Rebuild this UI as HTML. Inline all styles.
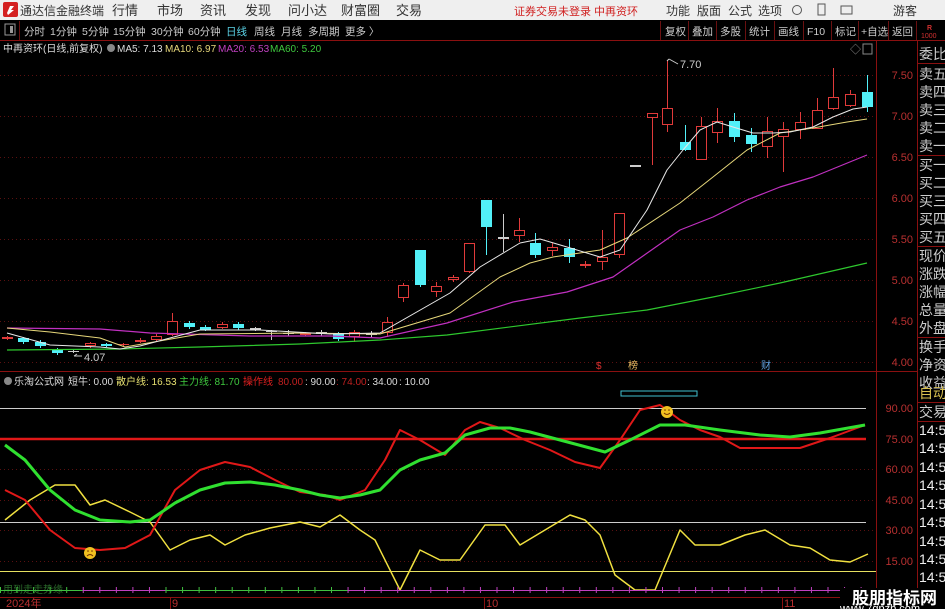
<!DOCTYPE html>
<html><head><meta charset="utf-8"><style>
html,body{margin:0;padding:0;background:#000;width:945px;height:609px;overflow:hidden}
svg{display:block;font-family:"Liberation Sans","Noto Sans CJK SC",sans-serif}
</style></head><body>
<svg id="s" width="945" height="609" xmlns="http://www.w3.org/2000/svg">
<rect x="0" y="0" width="945" height="609" fill="#000"/>
<rect x="0" y="0" width="945" height="20" fill="#efefef"/>
<rect x="3" y="2" width="15" height="15" rx="2" fill="#d42020"/>
<path d="M7 13 L10 6 L14 6 L11 10 L14 10 L8 15 Z" fill="#fff"/>
<g font-size="12" fill="#333">
<text x="20" y="15">通达信金融终端</text>
<text x="112" y="15" font-size="13">行情</text>
<text x="157" y="15" font-size="13">市场</text>
<text x="200" y="15" font-size="13">资讯</text>
<text x="245" y="15" font-size="13">发现</text>
<text x="288" y="15" font-size="13">问小达</text>
<text x="341" y="15" font-size="13">财富圈</text>
<text x="396" y="15" font-size="13">交易</text>
<text x="514" y="15" fill="#d02020" font-size="11">证券交易未登录  中再资环</text>
<text x="666" y="15">功能</text><text x="697" y="15">版面</text><text x="728" y="15">公式</text><text x="758" y="15">选项</text>
<text x="893" y="15">游客</text>
</g>
<circle cx="797" cy="10" r="4.5" fill="none" stroke="#555"/>
<rect x="818" y="4" width="7" height="11" fill="none" stroke="#555"/>
<rect x="841" y="6" width="11" height="8" fill="none" stroke="#555"/>
<rect x="0" y="20" width="945" height="20" fill="#000"/>
<line x1="0" y1="40.5" x2="945" y2="40.5" stroke="#8a1010"/>
<rect x="5" y="24" width="10" height="11" fill="none" stroke="#999"/>
<rect x="10" y="26" width="3" height="7" fill="#999"/>
<line x1="19.5" y1="21" x2="19.5" y2="40" stroke="#6a1010"/>
<g font-size="10.5" fill="#ccc">
<text x="24" y="35">分时</text><text x="50" y="35">1分钟</text><text x="82" y="35">5分钟</text><text x="113" y="35">15分钟</text><text x="151" y="35">30分钟</text><text x="188" y="35">60分钟</text>
<text x="226" y="35" fill="#5ad2e6">日线</text><text x="254" y="35">周线</text><text x="281" y="35">月线</text><text x="308" y="35">多周期</text><text x="345" y="35">更多 〉</text>
<text x="665" y="35">复权</text><text x="692" y="35">叠加</text><text x="720" y="35">多股</text><text x="749" y="35">统计</text><text x="778" y="35">画线</text><text x="807" y="35">F10</text><text x="835" y="35">标记</text><text x="861" y="35">+自选</text><text x="892" y="35">返回</text>
</g>
<g stroke="#6a1010">
<line x1="660.5" y1="21" x2="660.5" y2="40"/><line x1="688.5" y1="21" x2="688.5" y2="40"/><line x1="716.5" y1="21" x2="716.5" y2="40"/><line x1="745.5" y1="21" x2="745.5" y2="40"/><line x1="774.5" y1="21" x2="774.5" y2="40"/><line x1="803.5" y1="21" x2="803.5" y2="40"/><line x1="831.5" y1="21" x2="831.5" y2="40"/><line x1="858.5" y1="21" x2="858.5" y2="40"/><line x1="888.5" y1="21" x2="888.5" y2="40"/><line x1="916.5" y1="21" x2="916.5" y2="40"/>
</g>
<text x="927" y="30" font-size="7" fill="#d03030" font-weight="bold">R</text>
<text x="921" y="38" font-size="7" fill="#d03030">1000</text>
<g stroke="#8a1010">
<line x1="876.5" y1="41" x2="876.5" y2="609"/>
<line x1="917.5" y1="41" x2="917.5" y2="609"/>
<line x1="0" y1="371.5" x2="917" y2="371.5"/>
<line x1="0" y1="597.5" x2="917" y2="597.5"/>
</g>
<g id="grid" stroke="#5a1010" stroke-dasharray="1,3"></g>
<g font-size="10">
<text x="3" y="52" fill="#ddd">中再资环(日线,前复权)</text>
<circle cx="111" cy="48" r="4" fill="#888"/>
<text x="117" y="52" fill="#ddd">MA5: 7.13</text>
<text x="165" y="52" fill="#e6d77a">MA10: 6.97</text>
<text x="218" y="52" fill="#c040c0">MA20: 6.53</text>
<text x="270" y="52" fill="#3ec83e">MA60: 5.20</text>
</g>
<text x="850" y="53" font-size="11" fill="#888">◇</text>
<rect x="863" y="44" width="9" height="10" fill="none" stroke="#888"/>
<g font-size="11" fill="#b83030" text-anchor="end">
<text x="913" y="79">7.50</text><text x="913" y="120">7.00</text><text x="913" y="161">6.50</text><text x="913" y="202">6.00</text><text x="913" y="243">5.50</text><text x="913" y="284">5.00</text><text x="913" y="325">4.50</text><text x="913" y="366">4.00</text>
<text x="913" y="412">90.00</text><text x="913" y="443">75.00</text><text x="913" y="473">60.00</text><text x="913" y="504">45.00</text><text x="913" y="534">30.00</text><text x="913" y="565">15.00</text>
</g>
<g font-size="14" fill="#ccc">
<text x="919" y="59">委比</text>
<text x="919" y="79">卖五</text><text x="919" y="97">卖四</text><text x="919" y="115">卖三</text><text x="919" y="133">卖二</text><text x="919" y="151">卖一</text>
<text x="919" y="170">买一</text><text x="919" y="188">买二</text><text x="919" y="206">买三</text><text x="919" y="224">买四</text><text x="919" y="242">买五</text>
<text x="919" y="261">现价</text><text x="919" y="279">涨跌</text><text x="919" y="297">涨幅</text><text x="919" y="315">总量</text><text x="919" y="333">外盘</text>
<text x="919" y="352">换手</text><text x="919" y="370">净资</text><text x="919" y="388">收益</text>
<text x="919" y="398" fill="#d8c050">自动</text><text x="919" y="417">交易</text>
<text x="919" y="435" fill="#eee">14:56</text><text x="919" y="453" fill="#eee">14:56</text><text x="919" y="472" fill="#eee">14:56</text><text x="919" y="490" fill="#eee">14:56</text><text x="919" y="509" fill="#eee">14:56</text><text x="919" y="527" fill="#eee">14:56</text><text x="919" y="546" fill="#eee">14:56</text><text x="919" y="564" fill="#eee">14:56</text><text x="919" y="582" fill="#eee">14:56</text>
</g>
<g stroke="#8a1010"><line x1="918" y1="63.5" x2="945" y2="63.5"/><line x1="918" y1="155.5" x2="945" y2="155.5"/><line x1="918" y1="246.5" x2="945" y2="246.5"/><line x1="918" y1="337.5" x2="945" y2="337.5"/><line x1="918" y1="402.5" x2="945" y2="402.5"/><line x1="918" y1="421.5" x2="945" y2="421.5"/></g>
<g id="main"></g>
<text x="680" y="68" font-size="11" fill="#ccc">7.70</text>
<path d="M667 61 L669 59 M669 59 L678 64" stroke="#ccc" fill="none"/>
<text x="84" y="361" font-size="11" fill="#ccc">4.07</text>
<path d="M74 356 L82 356 M74 356 L77 354" stroke="#ccc" fill="none"/>
<text x="596" y="369" font-size="10" fill="#e03030">$</text>
<text x="628" y="369" font-size="10" fill="#e6b860">榜</text>
<text x="761" y="369" font-size="10" fill="#60a0e0">财</text>
<circle cx="8" cy="381" r="4" fill="#888"/>
<g font-size="10">
<text x="14" y="385" fill="#ddd">乐淘公式网</text>
<text x="68" y="385" fill="#ddd">短牛: 0.00</text>
<text x="116" y="385" fill="#e6e070">散户线: 16.53</text>
<text x="179" y="385" fill="#3ec83e">主力线: 81.70</text>
<text x="243" y="385" fill="#e02020">操作线</text>
<text x="278" y="385" fill="#c02020">80.00</text>
<text x="305" y="385" fill="#ddd">: 90.00</text>
<text x="336" y="385" fill="#c02020">: 74.00</text>
<text x="367" y="385" fill="#ddd">: 34.00</text>
<text x="399" y="385" fill="#ddd">: 10.00</text>
</g>
<rect x="621" y="391" width="76" height="5" fill="none" stroke="#40c0d0"/>
<g id="sub"></g>
<text x="3" y="593" font-size="10" fill="#2a6a2a">用到走走势缘</text>
<g id="strip"></g>
<g font-size="11" fill="#b83030">
<text x="6" y="607">2024年</text><text x="172" y="607">9</text><text x="486" y="607">10</text><text x="784" y="607">11</text>
</g>
<g stroke="#8a1010"><line x1="170.5" y1="598" x2="170.5" y2="609"/><line x1="484.5" y1="598" x2="484.5" y2="609"/><line x1="782.5" y1="598" x2="782.5" y2="609"/></g>
<rect x="840" y="588" width="105" height="21" fill="#000"/>
<text x="852" y="604" font-size="17" font-weight="bold" fill="#fff">股朋指标网</text>
<text x="840" y="612" font-size="11" fill="#fff">www.7gpzb.com</text>
</svg>
<script>
var NS="http://www.w3.org/2000/svg";
function el(p,t,a){var e=document.createElementNS(NS,t);for(var k in a)e.setAttribute(k,a[k]);p.appendChild(e);return e;}
var g=document.getElementById('grid');
[75,116,157,198,239,280,321,362,469,500,530,561].forEach(function(y){el(g,'line',{x1:0,x2:876,y1:y+.5,y2:y+.5});});
var m=document.getElementById('main');
var R='#e03a3a',C='#52f0f8',W='#ccc';
var cs=[[7,336,337,339,340,R],[23,337,338,342,344,C],[40,340,342,346,348,C],[57,348,350,353,355,C],[73,350,351,352,353,W],[90,342,343,346,348,R],[106,343,344,346,347,C],[123,343,344,345,346,R],[140,338,340,342,343,R],[156,334,336,340,341,R],[172,313,321,335,336,R],[189,321,323,327,329,C],[205,325,327,330,331,C],[222,322,324,328,329,R],[238,322,324,328,330,C],[255,327,328,330,331,W],[271,330,331,332,340,W],[288,330,333,334,336,W],[305,332,333,335,336,R],[321,330,332,334,336,W],[338,332,334,339,341,C],[354,330,332,337,342,R],[371,331,334,335,337,W],
[387,317,322,333,337,R],[403,283,285,298,302,R],[420,250,250,285,287,C],[436,282,286,292,297,R],[453,275,277,280,282,R],[469,243,243,272,273,R],[486,200,200,227,255,C],[503,214,237,239,252,W],[519,218,230,236,242,R],[535,233,243,255,258,C],[552,243,247,251,256,R],[569,239,248,257,263,C],[585,261,264,266,268,R],[602,230,257,262,270,R],[619,213,213,255,258,R],[635,166,165,167,166,W],[652,113,113,118,165,R],[667,60,108,125,132,R],[685,125,142,150,151,C],[701,117,126,160,160,R],[717,108,121,133,143,R],[734,113,121,137,142,C],[751,128,135,144,152,C],[767,117,131,147,158,R],[783,122,129,137,172,R],[800,112,122,130,139,R],[817,98,110,129,129,R],[833,68,97,109,110,R],[850,90,94,106,107,R],[867,75,92,107,112,C]];
cs.forEach(function(c){var x=c[0],col=c[5];
 el(m,'line',{x1:x+.5,x2:x+.5,y1:c[1],y2:c[4],stroke:col});
 var h=Math.max(1,c[3]-c[2]);
 if(col==C)el(m,'rect',{x:x-5,y:c[2],width:11,height:h,fill:C});
 else if(h<=2)el(m,'rect',{x:x-5,y:c[2],width:11,height:h,fill:col});
 else el(m,'rect',{x:x-4.5,y:c[2]+.5,width:10,height:h-1,fill:'#000',stroke:col});
});
function pl(p,pts,col,w){el(p,'polyline',{points:pts.map(function(a){return a.join(',')}).join(' '),fill:'none',stroke:col,'stroke-width':w||1,'stroke-linejoin':'round'});}
pl(m,[[7,350],[120,349],[200,347],[300,344],[380,340],[447,335],[580,318],[647,310],[713,297],[780,283],[867,263]],'#2ec82e',1.2);
pl(m,[[7,328],[100,329],[150,333],[250,336],[330,336],[380,338],[447,323],[513,302],[567,292],[613,277],[633,263],[680,230],[713,217],[747,200],[780,187],[813,177],[867,155]],'#c030c0',1.2);
pl(m,[[7,328],[50,332],[100,338],[125,347],[200,334],[300,333],[380,334],[450,313],[500,277],[530,263],[553,257],[600,250],[627,238],[680,203],[713,177],[747,150],[780,133],[813,128],[847,122],[867,119]],'#e6d77a',1);
pl(m,[[7,333],[50,345],[100,347],[120,349],[140,346],[200,330],[260,330],[330,334],[380,333],[450,293],[480,267],[520,243],[540,239],[567,247],[600,257],[620,250],[647,210],[667,170],[683,150],[700,130],[717,122],[733,127],[753,133],[773,133],[790,132],[813,127],[833,117],[853,109],[867,107]],'#e8e8e8',1);
var s=document.getElementById('sub');
el(s,'line',{x1:0,x2:866,y1:408.5,y2:408.5,stroke:'#ccc'});
el(s,'line',{x1:0,x2:866,y1:522.5,y2:522.5,stroke:'#ccc'});
el(s,'line',{x1:0,x2:876,y1:571.5,y2:571.5,stroke:'#e6e060'});
el(s,'line',{x1:0,x2:866,y1:439,y2:439,stroke:'#e01818','stroke-width':2.5});
pl(s,[[5,520],[30,500],[55,485],[75,485],[90,505],[105,500],[130,512],[150,522],[170,550],[190,540],[210,535],[225,545],[245,535],[270,528],[300,522],[320,527],[340,515],[360,530],[375,540],[400,590],[420,550],[440,560],[460,560],[485,525],[505,525],[520,545],[545,530],[570,515],[585,520],[600,535],[615,575],[635,590],[655,590],[680,530],[695,545],[720,545],[745,535],[765,530],[790,545],[810,548],[830,560],[850,562],[868,554]],'#f0e040',1.5);
pl(s,[[5,490],[25,500],[50,530],[75,548],[100,550],[125,548],[150,535],[175,490],[200,470],[225,462],[250,467],[275,480],[300,492],[325,495],[340,500],[365,490],[385,460],[400,430],[420,440],[445,455],[465,430],[480,422],[500,428],[525,440],[550,450],[575,462],[600,468],[620,440],[640,410],[660,405],[680,420],[700,430],[720,437],[740,448],[770,448],[800,448],[830,438],[865,425]],'#e01818',2);
pl(s,[[5,445],[25,460],[50,490],[75,510],[100,520],[130,522],[150,520],[175,503],[200,490],[225,483],[250,482],[275,485],[300,490],[320,495],[340,498],[360,495],[380,490],[400,470],[420,460],[445,453],[465,435],[490,428],[510,428],[530,432],[560,440],[590,448],[605,452],[630,440],[660,425],[685,425],[720,430],[760,435],[790,437],[820,433],[865,425]],'#30e030',3);
[[90,553,0],[667,412,1]].forEach(function(f){el(s,'circle',{cx:f[0],cy:f[1],r:6,fill:'#f0c020'});
 el(s,'path',{d:f[2]?'M'+(f[0]-3)+' '+(f[1]+1)+' q3 3 6 0':'M'+(f[0]-3)+' '+(f[1]+3)+' q3 -3 6 0',stroke:'#703000',fill:'none'});
 el(s,'circle',{cx:f[0]-2,cy:f[1]-2,r:.8,fill:'#703000'});el(s,'circle',{cx:f[0]+2,cy:f[1]-2,r:.8,fill:'#703000'});});
var st=document.getElementById('strip');
for(var x=0;x<868;x+=16.55){var col=(x<80||(x>160&&x<345))?'#40c040':'#c040c0';
 el(st,'line',{x1:x,x2:x+16.55,y1:590.5,y2:590.5,stroke:col});el(st,'line',{x1:x+.5,x2:x+.5,y1:587,y2:593,stroke:col});}
</script>
</body></html>
